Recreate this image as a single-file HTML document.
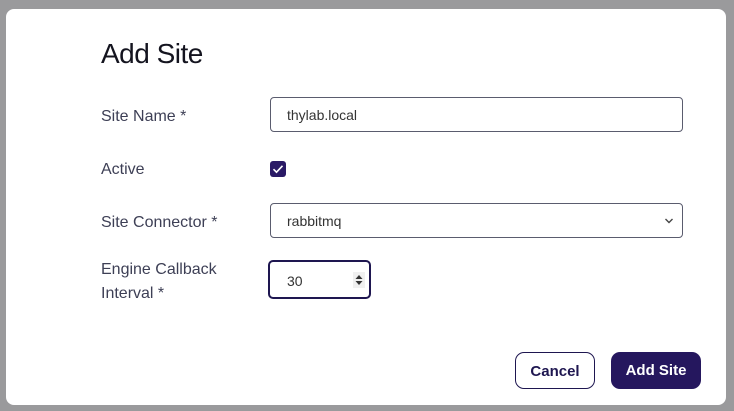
<!DOCTYPE html>
<html><head><style>
body{margin:0;width:734px;height:411px;background:#9a9a9c;font-family:"Liberation Sans",sans-serif;position:relative;overflow:hidden}
.m{position:absolute;left:6px;top:9px;width:720px;height:396px;background:#fff;border-radius:8px}
.a{position:absolute}
.t{left:101px;top:38px;font-size:28px;color:#14141f;letter-spacing:-0.5px}
.l{left:101px;font-size:16px;color:#3d3f55}
.in{left:270px;width:411px;height:33px;border:1px solid #5a5c6e;border-radius:4px;box-sizing:content-box}
.in span{position:absolute;left:16px;top:9px;font-size:14px;color:#333}
.btn{top:352px;height:37px;border-radius:9px;font-size:15px;font-weight:bold;text-align:center;line-height:38px;box-sizing:border-box}
</style></head><body>
<div class="m"></div>
<div class="a t">Add Site</div>
<div class="a l" style="top:108px">Site Name *</div>
<div class="a in" style="top:97px"><span>thylab.local</span></div>
<div class="a l" style="top:161px">Active</div>
<div class="a" style="left:270px;top:161px;width:16px;height:16px;background:#2a1a66;border-radius:3px">
<svg width="16" height="16" viewBox="0 0 16 16"><path d="M3.5 8.2l3 3 6-6.4" stroke="#fff" stroke-width="1.6" fill="none"/></svg></div>
<div class="a l" style="top:214px">Site Connector *</div>
<div class="a in" style="top:203px"><span>rabbitmq</span>
<svg style="position:absolute;right:8px;top:13px" width="10" height="8" viewBox="0 0 10 8"><path d="M1.5 2l3.5 3.5 3.5-3.5" stroke="#444" stroke-width="1.4" fill="none"/></svg></div>
<div class="a l" style="top:258px;line-height:24px">Engine Callback<br>Interval *</div>
<div class="a" style="left:268px;top:260px;width:103px;height:39px;border:2px solid #1e1650;border-radius:5px;box-sizing:border-box">
<span style="position:absolute;left:17px;top:11px;font-size:14px;color:#333">30</span>
<div style="position:absolute;left:83px;top:10px;width:12px;height:16px;background:#f0f0f0"></div>
<svg style="position:absolute;left:84px;top:12px" width="10" height="12" viewBox="0 0 10 12"><path d="M5 1l3.5 4h-7z M5 11l3.5-4h-7z" fill="#333"/></svg></div>
<div class="a btn" style="left:515px;width:80px;border:1px solid #1e1650;color:#1e1650;background:#fff">Cancel</div>
<div class="a btn" style="left:611px;width:90px;background:#25175e;color:#fff">Add Site</div>
</body></html>
